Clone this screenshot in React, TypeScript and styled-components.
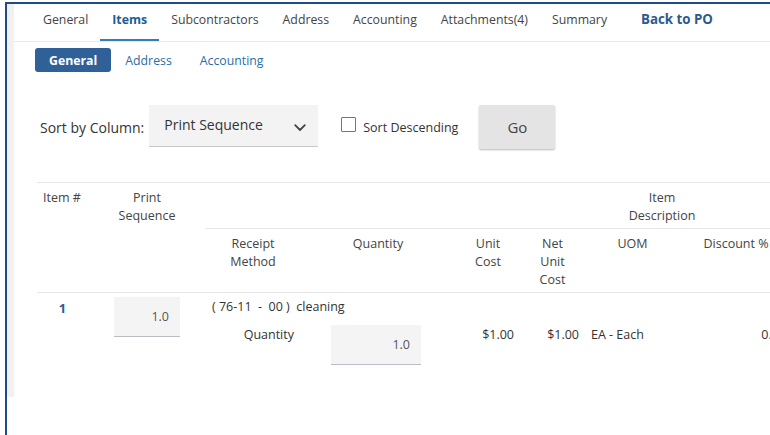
import React from "react";
import styled, { createGlobalStyle } from "styled-components";

const Global = createGlobalStyle`
  html, body {
    margin: 0;
    padding: 0;
    background: #ffffff;
    overflow: hidden;
  }
  body {
    font-family: "Open Sans", "Liberation Sans", Arial, sans-serif;
    color: #333333;
    font-size: 13px;
  }
`;

const Viewport = styled.div`
  width: 770px;
  height: 435px;
  padding: 2px 0 0 5px;
  box-sizing: border-box;
  overflow: hidden;
`;

const Frame = styled.div`
  display: flex;
  height: 433px;
  border-left: 2px solid #1f4b86;
  border-top: 2px solid #1f4b86;
  box-sizing: border-box;
`;

const SideStrip = styled.div`
  flex: 0 0 7px;
  height: 393px;
  background: #f1f1f1;
`;

const Main = styled.div`
  flex: 1;
  min-width: 0;
  display: flex;
  flex-direction: column;
`;

const TabBar = styled.nav`
  display: flex;
  align-items: stretch;
  height: 37px;
  padding-left: 17px;
  border-bottom: 1px solid #ebebeb;
`;

const Tab = styled.a<{ $active?: boolean; $back?: boolean }>`
  display: flex;
  align-items: center;
  padding: 0 12px 5px;
  margin-left: ${(p) => (p.$back ? "10px" : "0")};
  font-size: ${(p) => (p.$back ? "13.3px" : "12.3px")};
  font-weight: ${(p) => (p.$active || p.$back ? 700 : 400)};
  color: ${(p) => (p.$active ? "#1d5c97" : p.$back ? "#2b5b8f" : "#444444")};
  border-bottom: 2px solid ${(p) => (p.$active ? "#2f7fbf" : "transparent")};
  box-sizing: border-box;
  white-space: nowrap;
  cursor: pointer;
`;

const SubTabs = styled.div`
  display: flex;
  padding: 6px 0 0 21px;
`;

const SubTab = styled.a<{ $active?: boolean }>`
  display: flex;
  align-items: center;
  height: 24px;
  padding: 0 14px;
  border-radius: 3px;
  font-size: 12.3px;
  font-weight: ${(p) => (p.$active ? 700 : 400)};
  color: ${(p) => (p.$active ? "#ffffff" : "#2a6ea9")};
  background: ${(p) => (p.$active ? "#2f6098" : "transparent")};
  cursor: pointer;
`;

const SortRow = styled.div`
  display: flex;
  align-items: center;
  padding: 29px 0 0 26px;
`;

const SortLabel = styled.span`
  font-size: 14px;
  color: #333333;
  margin-right: 5px;
  padding-top: 4px;
`;

const Select = styled.div`
  display: flex;
  align-items: center;
  justify-content: space-between;
  width: 169px;
  height: 42px;
  margin-top: 2px;
  box-sizing: border-box;
  padding: 0 12px 0 15px;
  background: #f3f3f3;
  border-bottom: 1px solid #c9c9c9;
  font-size: 14px;
  color: #333333;
  span {
    margin-top: -3px;
  }
  svg {
    margin-top: 5px;
  }
`;

const CheckWrap = styled.label`
  display: flex;
  align-items: center;
  margin-left: 23px;
  font-size: 12.5px;
  color: #333333;
  padding-top: 4px;
`;

const Box = styled.span`
  width: 13px;
  height: 13px;
  border: 1px solid #767676;
  border-radius: 1px;
  margin: -6px 7px 0 0;
  background: #ffffff;
`;

const GoButton = styled.button`
  width: 76px;
  height: 44px;
  margin: 4px 0 0 21px;
  border: none;
  border-radius: 2px;
  background: #e4e4e4;
  box-shadow: 0 1px 2px rgba(0, 0, 0, 0.28);
  font-family: inherit;
  font-size: 15px;
  color: #444444;
  padding: 0 0 1px;
  cursor: pointer;
`;

const Table = styled.div`
  margin: 33px 0 0 23px;
  width: 1081px;
`;

const cols = "51px 118px 94px 156px 64px 65px 95px 112px 326px";

const HeadGrid = styled.div`
  display: grid;
  grid-template-columns: ${cols};
  border-top: 1px solid #e6e6e6;
  border-bottom: 1px solid #e6e6e6;
`;

const HeadCell = styled.div<{
  $col: string;
  $row: string;
  $align?: "left" | "center";
  $rule?: boolean;
}>`
  grid-column: ${(p) => p.$col};
  grid-row: ${(p) => p.$row};
  text-align: ${(p) => p.$align ?? "center"};
  font-size: 12.5px;
  line-height: 18px;
  color: #444444;
  padding: 6px 6px 3px;
  border-bottom: ${(p) => (p.$rule ? "1px solid #e6e6e6" : "none")};
`;

const BodyGrid = styled.div`
  display: grid;
  grid-template-columns: ${cols};
  grid-template-rows: 32px auto;
`;

const Cell = styled.div<{
  $col: string;
  $row: string;
  $align?: "left" | "center" | "right";
  $pt?: number;
}>`
  grid-column: ${(p) => p.$col};
  grid-row: ${(p) => p.$row};
  text-align: ${(p) => p.$align ?? "left"};
  font-size: 12.5px;
  line-height: 18px;
  color: #333333;
  padding: ${(p) => p.$pt ?? 1}px 6px 0;
  white-space: nowrap;
`;

const ItemLink = styled.a`
  font-weight: 700;
  font-size: 13px;
  color: #2a5e95;
`;

const NumberBox = styled.div<{ $w: number; $shift?: number }>`
  width: ${(p) => p.$w}px;
  height: 40px;
  box-sizing: border-box;
  margin: 0 auto;
  position: relative;
  left: ${(p) => p.$shift ?? 0}px;
  padding: 11px 11px 0 0;
  text-align: right;
  background: #f4f4f4;
  border-bottom: 1px solid #b8bec4;
  font-size: 12.5px;
  color: #555555;
`;

const Chevron = () => (
  <svg width="12" height="8" viewBox="0 0 12 8" aria-hidden>
    <path
      d="M1.2 1.2 L6 6 L10.8 1.2"
      fill="none"
      stroke="#444"
      strokeWidth="1.8"
      strokeLinecap="round"
      strokeLinejoin="round"
    />
  </svg>
);

const tabs = [
  "General",
  "Items",
  "Subcontractors",
  "Address",
  "Accounting",
  "Attachments(4)",
  "Summary",
];

export default function App() {
  return (
    <>
      <Global />
      <Viewport>
        <Frame>
          <SideStrip />
          <Main>
            <TabBar>
              {tabs.map((t) => (
                <Tab key={t} $active={t === "Items"}>
                  {t}
                </Tab>
              ))}
              <Tab $back>Back to PO</Tab>
            </TabBar>

            <SubTabs>
              <SubTab $active>General</SubTab>
              <SubTab>Address</SubTab>
              <SubTab>Accounting</SubTab>
            </SubTabs>

            <SortRow>
              <SortLabel>Sort by Column:</SortLabel>
              <Select>
                <span>Print Sequence</span>
                <Chevron />
              </Select>
              <CheckWrap>
                <Box />
                Sort Descending
              </CheckWrap>
              <GoButton>Go</GoButton>
            </SortRow>

            <Table>
              <HeadGrid>
                <HeadCell $col="1" $row="1 / 3" $align="left">
                  Item #
                </HeadCell>
                <HeadCell $col="2" $row="1 / 3">
                  Print
                  <br />
                  Sequence
                </HeadCell>
                <HeadCell $col="3 / 10" $row="1" $rule>
                  Item
                  <br />
                  Description
                </HeadCell>
                <HeadCell $col="3" $row="2">
                  Receipt
                  <br />
                  Method
                </HeadCell>
                <HeadCell $col="4" $row="2">
                  Quantity
                </HeadCell>
                <HeadCell $col="5" $row="2">
                  Unit
                  <br />
                  Cost
                </HeadCell>
                <HeadCell $col="6" $row="2">
                  Net
                  <br />
                  Unit
                  <br />
                  Cost
                </HeadCell>
                <HeadCell $col="7" $row="2">
                  UOM
                </HeadCell>
                <HeadCell $col="8" $row="2">
                  Discount %
                </HeadCell>
              </HeadGrid>

              <BodyGrid>
                <Cell $col="1" $row="1" $align="center" $pt={6}>
                  <ItemLink>1</ItemLink>
                </Cell>
                <Cell $col="2" $row="1 / 3" $pt={4}>
                  <NumberBox $w={66}>1.0</NumberBox>
                </Cell>
                <Cell $col="3 / 10" $row="1" $pt={5}>
                  ( 76-11 &nbsp;-&nbsp; 00 ) &nbsp;cleaning
                </Cell>
                <Cell $col="3" $row="2" $align="right" $pt={1}>
                  Quantity
                </Cell>
                <Cell $col="4" $row="2" $pt={0}>
                  <NumberBox $w={90} $shift={-2}>1.0</NumberBox>
                </Cell>
                <Cell $col="5" $row="2" $align="right">
                  $1.00
                </Cell>
                <Cell $col="6" $row="2" $align="right">
                  $1.00
                </Cell>
                <Cell $col="7" $row="2">
                  EA - Each
                </Cell>
                <Cell $col="8" $row="2" $align="right">
                  0.00
                </Cell>
              </BodyGrid>
            </Table>
          </Main>
        </Frame>
      </Viewport>
    </>
  );
}
